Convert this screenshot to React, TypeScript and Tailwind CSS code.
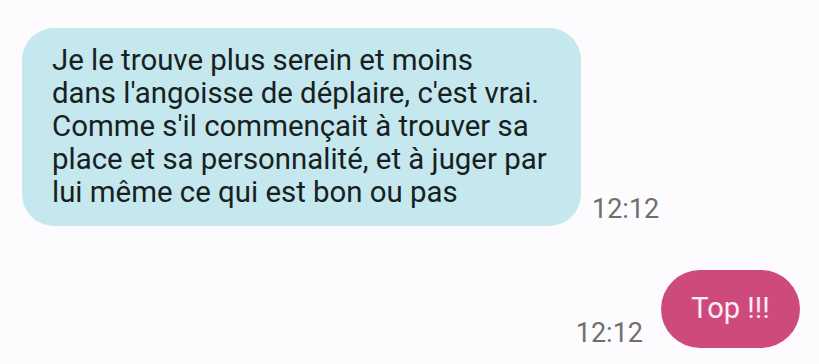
import React from 'react';

const lines = [
  'Je le trouve plus serein et moins',
  "dans l'angoisse de déplaire, c'est vrai.",
  "Comme s'il commençait à trouver sa",
  'place et sa personnalité, et à juger par',
  'lui même ce qui est bon ou pas',
];

export default function App() {
  return (
    <div
      className="w-[819px] h-[364px] bg-[#fdfbfd] overflow-hidden flex flex-col"
      style={{ fontFamily: 'Roboto, "Noto Sans", sans-serif' }}
    >
      {/* incoming message */}
      <div className="flex items-end pl-[22px] pt-[28px]">
        <div className="w-[559px] h-[198px] bg-[#c4e8ee] rounded-[32px] pl-[30px] pt-[16px] text-[29.4px] leading-[33px] text-[#18211f]">
          {lines.map((l) => (
            <div key={l} className="whitespace-nowrap">{l}</div>
          ))}
        </div>
        <span className="ml-[11px] mb-[1px] text-[27px] leading-[32px] text-[#6f6f6f]">12:12</span>
      </div>

      {/* outgoing message */}
      <div className="flex items-end justify-end pr-[19px] mt-[44px]">
        <span className="mb-[-1px] mr-[18px] text-[27px] leading-[32px] text-[#6f6f6f]">12:12</span>
        <div className="w-[139px] h-[78px] rounded-full bg-[#cf4a7c] flex items-center justify-center text-[29px] text-[#fdeef4]">
          Top !!!
        </div>
      </div>
    </div>
  );
}
